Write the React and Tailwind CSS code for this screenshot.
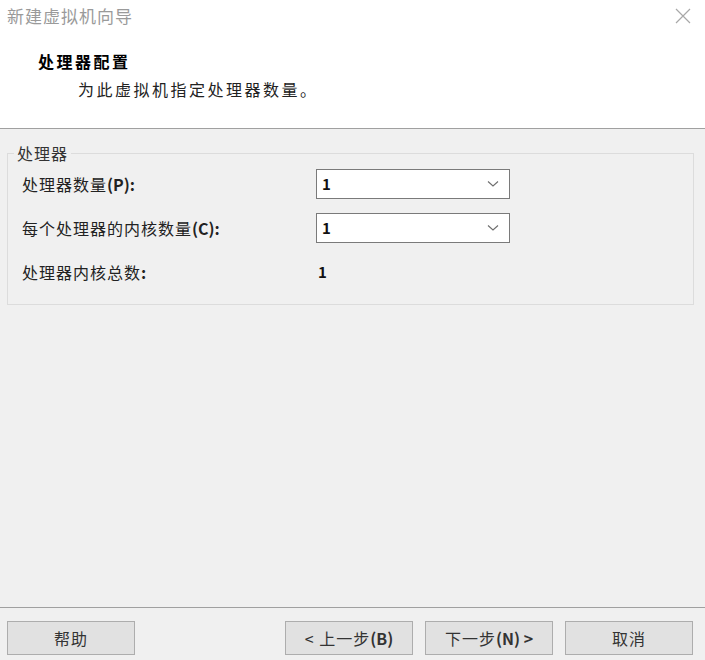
import React from 'react';

const font = { fontFamily: '"Noto Sans CJK SC", "Noto Sans", sans-serif' };

function Chevron() {
  return (
    <svg width="12" height="8" viewBox="0 0 12 8" className="shrink-0">
      <path d="M1 1.5 L6 6 L11 1.5" fill="none" stroke="#6e6e6e" strokeWidth="1.1" />
    </svg>
  );
}

function Select({ value }) {
  return (
    <div className="flex h-[30px] w-[194px] items-center justify-between border border-[#7a7a7a] bg-white pl-[5px] pr-[10px]">
      <span className="text-[15px] font-semibold text-[#111]">{value}</span>
      <Chevron />
    </div>
  );
}

function Btn({ children }) {
  return (
    <button className="flex h-[34px] w-[128px] items-center justify-center border border-[#adadad] bg-[#e1e1e1] text-[16px] tracking-[1px] text-[#333]">
      {children}
    </button>
  );
}

export default function App() {
  return (
    <div className="flex h-[660px] w-[705px] flex-col overflow-hidden bg-white" style={font}>
      {/* title bar */}
      <div className="flex h-[32px] items-center justify-between pl-[7px] pr-[14px]">
        <span className="text-[17px] tracking-[1px] text-[#9a9a9a]">新建虚拟机向导</span>
        <svg width="16" height="16" viewBox="0 0 16 16">
          <path d="M1 1 L15 15 M15 1 L1 15" stroke="#a8a8a8" strokeWidth="1.2" />
        </svg>
      </div>

      {/* header */}
      <div className="h-[97px] border-b border-[#a0a0a0] pt-[18px]">
        <div className="pl-[38px] text-[16px] font-bold leading-[22px] tracking-[2.5px] text-black">处理器配置</div>
        <div className="pl-[78px] pt-[6px] text-[16px] leading-[22px] tracking-[2.5px] text-[#222]">为此虚拟机指定处理器数量。</div>
      </div>

      {/* body */}
      <div className="flex flex-1 flex-col bg-[#f0f0f0] pl-[7px] pr-[11px] pt-[24px]">
        <div className="relative h-[152px] border border-[#dcdcdc] pl-[14px] pt-[15px]">
          <span className="absolute left-[6px] top-[-11px] bg-[#f0f0f0] px-[3px] text-[16px] leading-[20px] tracking-[1px] text-[#333]">处理器</span>
          <div className="grid grid-cols-[294px_194px] gap-y-[14px] text-[16px] text-[#222]">
            <div className="flex h-[30px] items-center tracking-[1px]">处理器数量<span className="font-semibold tracking-normal">(P):</span></div>
            <Select value="1" />
            <div className="flex h-[30px] items-center tracking-[1px]">每个处理器的内核数量<span className="font-semibold tracking-normal">(C):</span></div>
            <Select value="1" />
            <div className="flex h-[30px] items-center tracking-[1px]">处理器内核总数<span className="font-semibold">:</span></div>
            <div className="flex h-[30px] items-center pl-[2px] text-[15px] font-semibold text-[#111]">1</div>
          </div>
        </div>
      </div>

      {/* footer */}
      <div className="flex h-[53px] items-start border-t border-[#a0a0a0] bg-[#f0f0f0] pl-[7px] pr-[12px] pt-[13px]">
        <Btn>帮助</Btn>
        <div className="ml-auto flex gap-[12px]">
          <Btn>&lt; 上一步<span className="font-semibold tracking-normal">(B)</span></Btn>
          <Btn>下一步<span className="font-semibold tracking-normal">(N) &gt;</span></Btn>
          <Btn>取消</Btn>
        </div>
      </div>
    </div>
  );
}
